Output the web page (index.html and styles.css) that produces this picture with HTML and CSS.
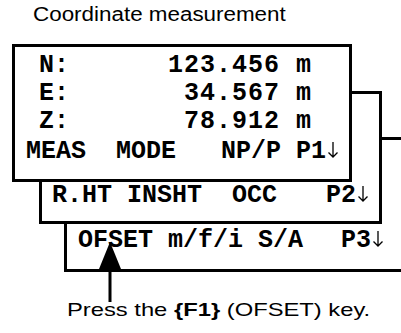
FILE: index.html
```html
<!DOCTYPE html>
<html lang="en">
<head>
    <meta charset="UTF-8">
    <meta name="viewport" content="width=device-width, initial-scale=1.0">
    <title>Coordinate measurement</title>
    <link rel="stylesheet" href="styles.css">
</head>
<body>

<h2 class="title">Coordinate measurement</h2>

<div class="stage">
    <!-- page 3 sits at the back, runs off the right edge -->
    <div class="screen screen-p3">
        <div class="keys">OFSET m/f/i S/A  <span class="last">P3<svg class="dn" width="12" height="16" viewBox="0 0 12 16"><path d="M6 0V15M1.5 10.5L6 15L10.5 10.5" fill="none" stroke="#000" stroke-width="1.3"/></svg></span></div>
    </div>

    <div class="screen screen-p2">
        <div class="keys">R.HT INSHT  OCC   <span class="last-p2">P2<svg class="dn" width="12" height="16" viewBox="0 0 12 16"><path d="M6 0V15M1.5 10.5L6 15L10.5 10.5" fill="none" stroke="#000" stroke-width="1.3"/></svg></span></div>
    </div>

    <div class="screen screen-p1">
        <div class="row"><span>N:</span><span class="val">123.456 m</span></div>
        <div class="row"><span>E:</span><span class="val">34.567 m</span></div>
        <div class="row"><span>Z:</span><span class="val">78.912 m</span></div>
        <div class="keys keys-p1">MEAS  MODE   NP/P P1<svg class="dn" width="12" height="16" viewBox="0 0 12 16"><path d="M6 0V15M1.5 10.5L6 15L10.5 10.5" fill="none" stroke="#000" stroke-width="1.3"/></svg></div>
    </div>

    <svg class="pointer" width="30" height="60" viewBox="0 0 30 60">
        <polygon points="15,0 4,27 26,27" fill="#000"/>
        <rect x="13.5" y="25" width="3" height="35" fill="#000"/>
    </svg>
</div>

<p class="caption">Press the <b>{F1}</b> (OFSET) key.</p>

</body>
</html>
```

FILE: styles.css
```css
html, body {
    margin: 0;
    padding: 0;
    background: #fff;
    overflow: hidden;
}
body {
    width: 401px;
    height: 333px;
    font-family: 'Liberation Sans', Arial, sans-serif;
    color: #000;
}
.title {
    width: fit-content;
    margin: 0 0 0 33px;
    padding-top: 3px;
    font-size: 20px;
    font-weight: normal;
    line-height: 23px;
    transform: scaleX(1.12);
    transform-origin: left center;
}
.stage {
    position: relative;
    display: grid;
    margin-top: 18px;
}
.screen {
    grid-area: 1 / 1;
    box-sizing: border-box;
    border: 3px solid #000;
    background: #fff;
    font-family: 'Liberation Mono', 'Courier New', monospace;
    font-weight: bold;
    font-size: 25px;
}
.screen-p1 {
    margin-left: 12px;
    width: 340px;
    height: 138px;
    padding: 5px 37px 0 24px;
}
.screen-p2 {
    margin: 47px 0 0 39px;
    width: 343px;
    height: 133px;
    padding: 88px 0 0 10px;
}
.screen-p3 {
    margin: 93px 0 0 64px;
    width: 337px;
    height: 135px;
    border-right: 0;
    padding: 87px 0 0 11px;
}
.row {
    display: flex;
    justify-content: space-between;
    line-height: 28px;
    white-space: pre;
}
.val {
    letter-spacing: 1px;
}
.keys {
    line-height: 28px;
    white-space: pre;
}
.keys-p1 {
    margin: 2px 0 0 -13px;
}
.last {
    margin-left: 8px;
}
.last-p2 {
    margin-left: 4px;
}
.dn {
    margin-left: 1px;
    vertical-align: baseline;
}
.pointer {
    position: absolute;
    left: 95px;
    top: 198px;
}
.caption {
    width: fit-content;
    margin: 0 0 0 67px;
    padding-top: 27px;
    font-size: 19px;
    line-height: 22px;
    transform: scaleX(1.25);
    transform-origin: left center;
}
```
